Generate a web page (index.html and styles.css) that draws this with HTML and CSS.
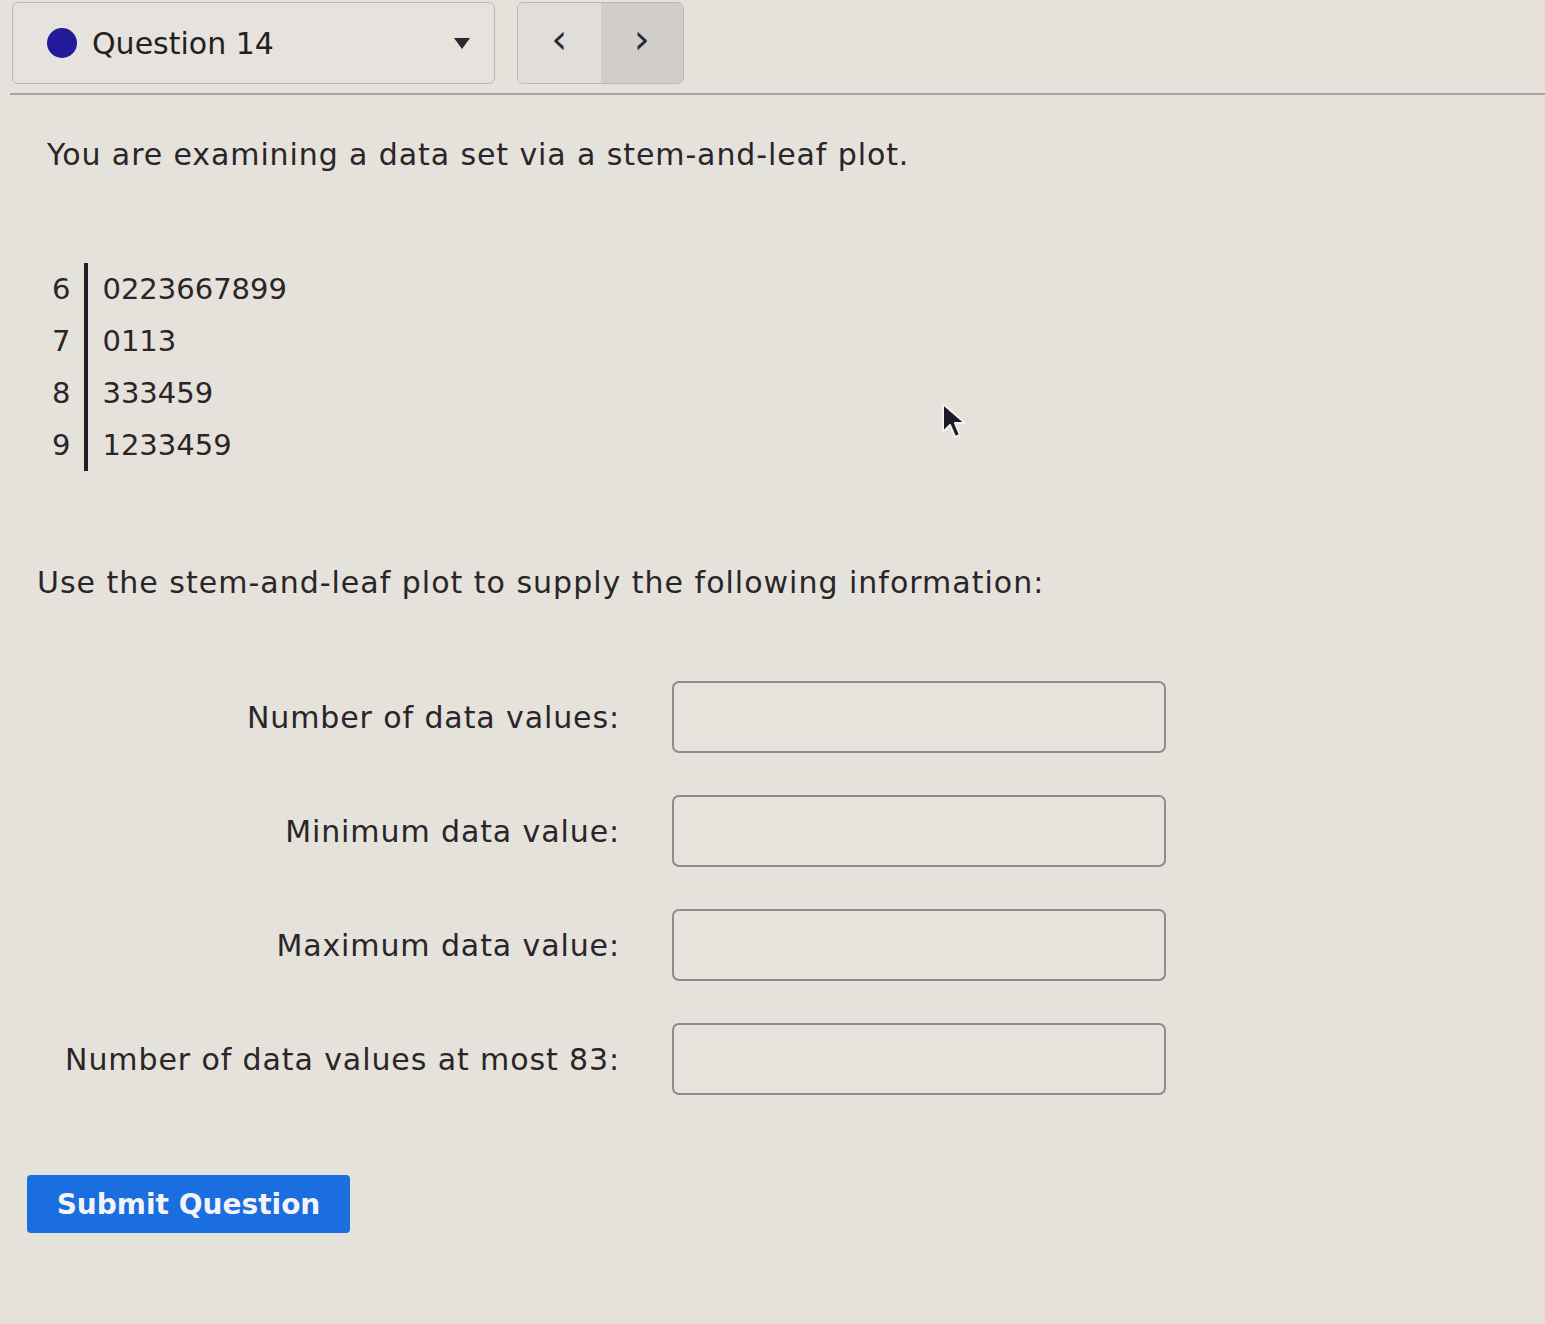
FILE: index.html
```html
<!DOCTYPE html>
<html lang="en">
<head>
<meta charset="UTF-8">
<title>Question 14</title>
<link rel="stylesheet" href="styles.css">
</head>
<body>

<!-- Question navigation -->
<div class="topbar">
  <div class="question-select">
    <span class="dot"></span>
    <span class="q-label">Question 14</span>
    <span class="caret"></span>
  </div>
  <div class="nav">
    <button class="nav-btn prev">&lsaquo;</button>
    <button class="nav-btn next">&rsaquo;</button>
  </div>
</div>
<hr class="divider">

<div class="content">
  <p class="intro">You are examining a data set via a stem-and-leaf plot.</p>

  <!-- Stem and leaf plot -->
  <table class="stem-plot">
    <tr><td class="stem">6</td><td class="leaf">0223667899</td></tr>
    <tr><td class="stem">7</td><td class="leaf">0113</td></tr>
    <tr><td class="stem">8</td><td class="leaf">333459</td></tr>
    <tr><td class="stem">9</td><td class="leaf">1233459</td></tr>
  </table>

  <p class="prompt">Use the stem-and-leaf plot to supply the following information:</p>

  <div class="answers">
    <label class="answer-label">Number of data values:</label>
    <input class="answer-input" type="text">
    <label class="answer-label">Minimum data value:</label>
    <input class="answer-input" type="text">
    <label class="answer-label">Maximum data value:</label>
    <input class="answer-input" type="text">
    <label class="answer-label">Number of data values at most 83:</label>
    <input class="answer-input" type="text">
  </div>

  <button class="submit">Submit Question</button>
</div>

<!-- mouse pointer in the shot -->
<svg class="pointer" width="26" height="40" viewBox="0 0 26 40">
  <path d="M2 2 L2 30 L9 23 L14 35 L19 33 L14 21 L24 21 Z" fill="#1d1b2a" stroke="#f4f2ee" stroke-width="2" stroke-linejoin="round"/>
</svg>

</body>
</html>
```

FILE: styles.css
```css
body {
  margin: 0;
  background-color: #e5e1db;
  font-family: "DejaVu Sans", Verdana, sans-serif;
  color: #2a2528;
  position: relative;
  min-height: 1324px;
}

/* Top bar */
.topbar {
  display: flex;
  align-items: flex-start;
  gap: 22px;
  padding: 2px 0 0 12px;
}

.question-select {
  display: flex;
  align-items: center;
  width: 483px;
  height: 82px;
  box-sizing: border-box;
  padding: 0 24px 0 34px;
  border: 1px solid #bdb8b3;
  border-radius: 6px;
  background-color: #e6e2dd;
}

.dot {
  width: 30px;
  height: 30px;
  border-radius: 50%;
  background-color: #221a9a;
  margin-right: 15px;
}

.q-label {
  flex: 1;
  font-size: 30px;
  color: #231f22;
}

.caret {
  width: 0;
  height: 0;
  border-left: 8px solid transparent;
  border-right: 8px solid transparent;
  border-top: 11px solid #2b2730;
}

.nav {
  display: flex;
  width: 165px;
  height: 80px;
  border: 1px solid #bdb8b3;
  border-radius: 6px;
  overflow: hidden;
}

.nav-btn {
  flex: 1;
  border: none;
  margin: 0;
  font-family: "DejaVu Sans", sans-serif;
  font-size: 40px;
  color: #2b2730;
  padding: 0 0 8px 0;
}

.prev { background-color: #e1ddd8; }
.next { background-color: #d1cdc9; }

.divider {
  margin: 9px 0 0 10px;
  border: none;
  border-top: 2px solid #a9a5a2;
}

/* Main content */
.content {
  padding: 0 0 0 47px;
}

.intro {
  margin: 40px 0 0 0;
  font-size: 30px;
  line-height: 40px;
  letter-spacing: 0.9px;
}

.stem-plot {
  margin: 88px 0 0 5px;
  border-collapse: collapse;
  font-size: 29px;
}

.stem-plot td {
  height: 52px;
  padding: 0;
}

.stem {
  padding-right: 14px !important;
  text-align: right;
  border-right: 4px solid #241c2a;
}

.leaf {
  padding-left: 14px !important;
}

.prompt {
  margin: 92px 0 0 -10px;
  font-size: 30px;
  line-height: 40px;
  letter-spacing: 1px;
}

/* Answer rows */
.answers {
  display: grid;
  grid-template-columns: 573px 494px;
  column-gap: 52px;
  row-gap: 42px;
  align-items: center;
  margin-top: 78px;
}

.answer-label {
  text-align: right;
  font-size: 30px;
  letter-spacing: 0.9px;
}

.answer-input {
  height: 72px;
  box-sizing: border-box;
  border: 2px solid #8f8b88;
  border-radius: 7px;
  background-color: #e6e2dc;
}

.submit {
  margin: 80px 0 0 -20px;
  width: 323px;
  height: 58px;
  border: none;
  border-radius: 4px;
  background-color: #1b6ee0;
  color: #f4f4f8;
  font-family: "DejaVu Sans", sans-serif;
  font-weight: bold;
  font-size: 28px;
}

.pointer {
  position: absolute;
  left: 941px;
  top: 402px;
}
```
